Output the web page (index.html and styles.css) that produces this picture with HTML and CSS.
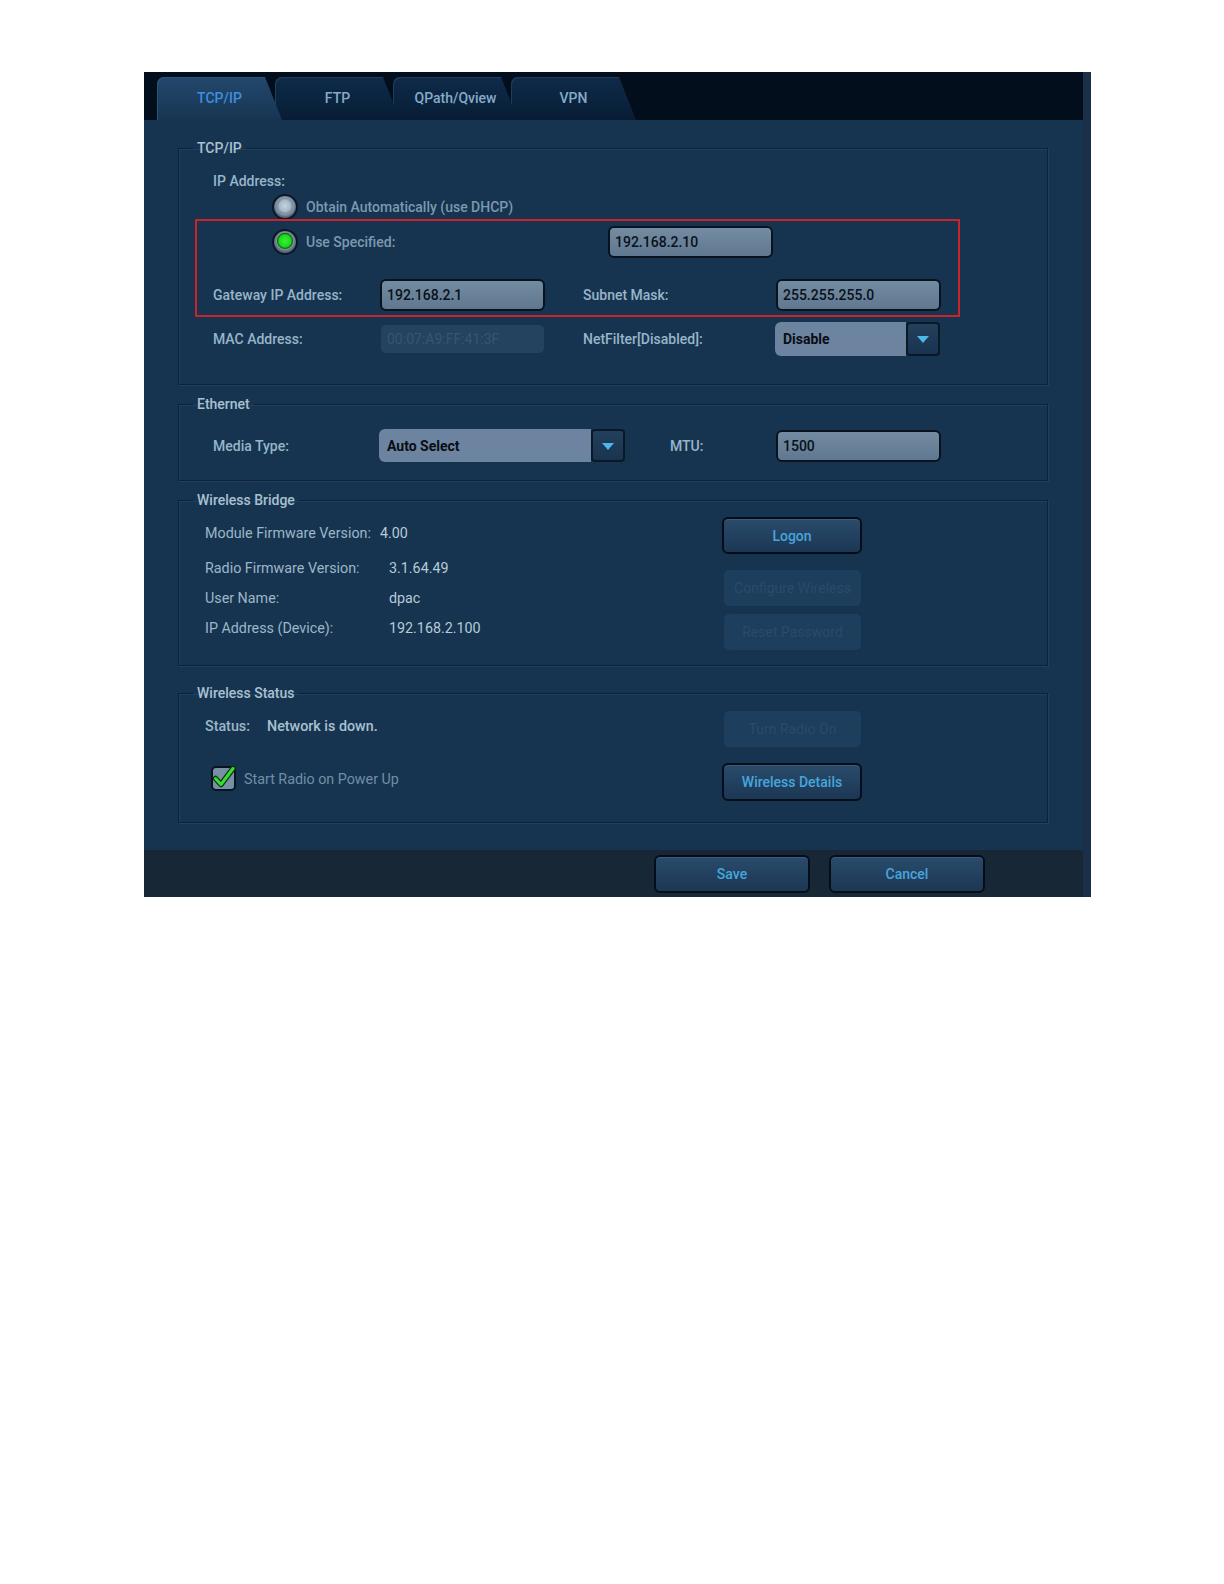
FILE: index.html
```html
<!DOCTYPE html>
<html lang="en">
<head>
  <meta charset="UTF-8">
  <title>Network Settings - TCP/IP</title>
  <link rel="stylesheet" href="styles.css">
</head>
<body>

<div class="panel">
  <div class="tabs">
    <div class="tab activa">TCP/IP</div>
    <div class="tab">FTP</div>
    <div class="tab">QPath/Qview</div>
    <div class="tab">VPN</div>
  </div>

  <div class="contenido">
    <fieldset class="grupo tcpip">
      <legend>TCP/IP</legend>
      <div class="cuerpo">
        <div class="fila-ip etiqueta">IP Address:</div>
        <div class="fila-radio r1">
          <span class="radio"></span>
          <span class="radio-texto">Obtain Automatically (use DHCP)</span>
        </div>
        <div class="fila-radio r2">
          <span class="radio marcado"></span>
          <span class="radio-texto spec">Use Specified:</span>
          <div class="campo">192.168.2.10</div>
        </div>
        <div class="fila-grid gw">
          <span class="etiqueta">Gateway IP Address:</span>
          <div class="campo">192.168.2.1</div>
          <span class="etiqueta">Subnet Mask:</span>
          <div class="campo">255.255.255.0</div>
        </div>
        <div class="fila-grid mac">
          <span class="etiqueta">MAC Address:</span>
          <div class="campo inactivo">00:07:A9:FF:41:3F</div>
          <span class="etiqueta">NetFilter[Disabled]:</span>
          <div class="combo corto">
            <span class="combo-valor">Disable</span>
            <span class="combo-flecha"></span>
          </div>
        </div>
      </div>
    </fieldset>

    <fieldset class="grupo ethernet">
      <legend>Ethernet</legend>
      <div class="cuerpo">
        <div class="fila-eth">
          <span class="etiqueta">Media Type:</span>
          <div class="combo largo">
            <span class="combo-valor">Auto Select</span>
            <span class="combo-flecha"></span>
          </div>
          <span class="etiqueta mtu">MTU:</span>
          <div class="campo">1500</div>
        </div>
      </div>
    </fieldset>

    <fieldset class="grupo bridge">
      <legend>Wireless Bridge</legend>
      <div class="doble">
        <div class="info">
          <div class="dato d1"><span class="dato-nombre libre">Module Firmware Version:</span><span class="dato-valor">4.00</span></div>
          <div class="dato d2"><span class="dato-nombre">Radio Firmware Version:</span><span class="dato-valor">3.1.64.49</span></div>
          <div class="dato d3"><span class="dato-nombre">User Name:</span><span class="dato-valor">dpac</span></div>
          <div class="dato d3"><span class="dato-nombre">IP Address (Device):</span><span class="dato-valor">192.168.2.100</span></div>
        </div>
        <div class="botones">
          <button class="boton b-logon">Logon</button>
          <button class="boton apagado b-conf">Configure Wireless</button>
          <button class="boton apagado b-reset">Reset Password</button>
        </div>
      </div>
    </fieldset>

    <fieldset class="grupo estado">
      <legend>Wireless Status</legend>
      <div class="doble">
        <div class="info">
          <div class="dato s1"><span class="dato-nombre status">Status:</span><span class="dato-valor">Network is down.</span></div>
          <div class="fila-check">
            <span class="check">
              <svg width="25" height="25" viewBox="0 0 25 25">
                <path d="M4.5 13.5 L10 19.5 L22 3.5" fill="none" stroke="#0b360b" stroke-width="5.5" stroke-linecap="round" stroke-linejoin="round"/>
                <path d="M4.5 13.5 L10 19.5 L22 3.5" fill="none" stroke="#39dc34" stroke-width="3" stroke-linecap="round" stroke-linejoin="round"/>
              </svg>
            </span>
            <span class="check-texto">Start Radio on Power Up</span>
          </div>
        </div>
        <div class="botones">
          <button class="boton apagado b-radio">Turn Radio On</button>
          <button class="boton b-detalles">Wireless Details</button>
        </div>
      </div>
    </fieldset>
  </div>

  <div class="pie">
    <button class="boton pie-boton">Save</button>
    <button class="boton pie-boton">Cancel</button>
  </div>

  <div class="marca-roja"></div>
</div>

</body>
</html>
```

FILE: styles.css
```css
* {
  box-sizing: border-box;
}
body {
  margin: 0;
  padding: 72px 0 0 144px;
  background: #fff;
  font-family: Roboto, "Liberation Sans", sans-serif;
  font-size: 14px;
}
.panel {
  position: relative;
  width: 947px;
  height: 825px;
  background: #163450;
  border-right: 8px solid #1b3048;
  display: flex;
  flex-direction: column;
}

/* pestañas */
.tabs {
  height: 48px;
  background: #020e1c;
  display: flex;
  align-items: flex-end;
  padding-left: 13px;
}
.tab {
  position: relative;
  width: 125px;
  height: 43px;
  margin-right: -7px;
  border-top-left-radius: 7px;
  clip-path: polygon(0 0, calc(100% - 17px) 0, 100% 100%, 0 100%);
  background: linear-gradient(#0e2b49, #081d35);
  box-shadow: inset 1px 1px #1e3c5b;
  color: #86abc8;
  font-weight: 500;
  text-align: center;
  line-height: 43px;
}
.tab:nth-child(2) { z-index: 3; }
.tab:nth-child(3) { z-index: 2; }
.tab:nth-child(4) { z-index: 1; }
.tab.activa {
  z-index: 4;
  background: linear-gradient(#22486d, #173552);
  box-shadow: inset 1px 1px #2b5479;
  color: #3d8fe0;
}

.contenido {
  flex: 1;
  padding: 19px 35px 0 34px;
}

/* grupos */
.grupo {
  margin: 0;
  padding: 0;
  border: 1px solid #0d2239;
  box-shadow: 1px 1px 0 #1f4060, inset 1px 1px 0 #1f4060;
}
.grupo legend {
  margin-left: 14px;
  padding: 0 4px;
  line-height: 18px;
  color: #a9c0d0;
  font-weight: 500;
}
.ethernet { margin-top: 10px; }
.bridge { margin-top: 10px; }
.estado { margin-top: 18px; }

.cuerpo {
  padding-left: 34px;
}
.tcpip .cuerpo { padding-bottom: 28px; }
.ethernet .cuerpo { padding-bottom: 18px; }

.etiqueta {
  color: #98b5c9;
  font-weight: 500;
}
.fila-ip {
  margin-top: 14px;
  height: 20px;
  line-height: 20px;
}
.fila-radio {
  display: flex;
  align-items: center;
  padding-left: 59px;
}
.fila-radio.r1 { margin-top: 3px; height: 26px; }
.fila-radio.r2 { margin-top: 6px; height: 32px; }
.radio {
  width: 26px;
  height: 26px;
  border-radius: 50%;
  border: 2px solid #0d1824;
  background: radial-gradient(circle at 50% 45%, #c4d3de 0, #a3b6c6 6px, #8095a7 7px, #7f93a4 9px, #54687a 11px);
}
.radio.marcado {
  background: radial-gradient(circle at 50% 45%, #3cf03c 0, #19d919 6px, #0b6d10 7.5px, #7d91a2 8.5px, #54687a 11px);
}
.radio-texto {
  margin-left: 8px;
  color: #7b99af;
  font-weight: 500;
}
.radio-texto.spec {
  width: 302px;
}

.fila-grid {
  display: grid;
  grid-template-columns: 167px 203px 193px 164px;
  align-items: center;
}
.fila-grid.gw { margin-top: 21px; height: 32px; }
.fila-grid.mac { margin-top: 11px; height: 34px; }

.campo {
  width: 165px;
  height: 32px;
  padding-left: 5px;
  border: 2px solid #08131f;
  border-radius: 6px;
  background: linear-gradient(#748ca2, #5f788f);
  color: #09111a;
  font-weight: 500;
  line-height: 28px;
}
.campo.inactivo {
  width: 163px;
  height: 28px;
  margin-left: 1px;
  border: none;
  border-radius: 5px;
  background: #23435f;
  color: #375671;
  font-weight: 400;
  padding-left: 6px;
}

.combo {
  display: flex;
  height: 34px;
}
.combo.corto { width: 165px; margin-left: -1px; }
.combo.largo { width: 246px; height: 33px; }
.combo-valor {
  flex: 1;
  padding-left: 8px;
  border-radius: 6px 0 0 6px;
  background: #6d84a0;
  color: #080d14;
  font-weight: 700;
  display: flex;
  align-items: center;
}
.combo-flecha {
  position: relative;
  width: 34px;
  border: 2px solid #0a1827;
  border-radius: 4px;
  background: linear-gradient(#223f5c, #1a3450);
}
.combo-flecha::after {
  content: "";
  position: absolute;
  left: 9px;
  top: 12px;
  border-left: 6px solid transparent;
  border-right: 6px solid transparent;
  border-top: 7px solid #4fb6ea;
}

.fila-eth {
  margin-top: 16px;
  display: flex;
  align-items: center;
  height: 33px;
}
.fila-eth > .etiqueta:first-child { width: 166px; }
.etiqueta.mtu {
  width: 106px;
  margin-left: 45px;
}

/* wireless */
.doble {
  display: flex;
  padding-left: 26px;
}
.info {
  width: 517px;
}
.dato {
  height: 20px;
  line-height: 20px;
  display: flex;
  font-size: 14.3px;
}
.dato-nombre {
  width: 184px;
  color: #9db6c8;
}
.dato-nombre.libre { width: 175px; }
.dato-nombre.status { width: 62px; }
.dato-valor {
  color: #b7cad8;
}
.dato.d1 { margin-top: 14px; }
.dato.d2 { margin-top: 15px; }
.dato.d3 { margin-top: 10px; }
.dato.s1 { margin-top: 14px; font-weight: 500; }
.dato.s1 .dato-valor { color: #a9c0d0; }

.fila-check {
  margin-top: 30px;
  padding-left: 6px;
  display: flex;
  align-items: center;
}
.check {
  width: 25px;
  height: 25px;
  border: 2px solid #0a1420;
  border-radius: 5px;
  background: #7790a5;
  display: flex;
}
.check svg {
  margin: -3px 0 0 -2px;
  overflow: visible;
}
.check-texto {
  margin-left: 8px;
  color: #6f8fa7;
  font-size: 14.3px;
}

.botones {
  display: flex;
  flex-direction: column;
}
.bridge .botones { padding-bottom: 15px; }
.estado .botones { padding-bottom: 21px; }

.boton {
  width: 140px;
  height: 37px;
  padding: 0;
  border: 2px solid #050e18;
  border-radius: 6px;
  background: linear-gradient(#2a4b6b, #1b3754);
  box-shadow: inset 0 1px #3a5c7c;
  color: #46a6dc;
  font-family: Roboto, "Liberation Sans", sans-serif;
  font-size: 14px;
  font-weight: 500;
}
.boton.apagado {
  width: 137px;
  height: 36px;
  margin-left: 2px;
  border: none;
  border-radius: 5px;
  background: #1e3e5d;
  box-shadow: none;
  color: #2a4b6a;
  font-weight: 400;
}
.b-logon { margin-top: 8px; }
.b-conf { margin-top: 16px; }
.b-reset { margin-top: 8px; }
.b-radio { margin-top: 9px; }
.b-detalles { margin-top: 16px; height: 38px; }

/* pie */
.pie {
  height: 47px;
  background: #172736;
  display: flex;
  justify-content: flex-end;
  gap: 19px;
  padding: 5px 98px 0 0;
}
.pie-boton {
  width: 156px;
  height: 38px;
}

.marca-roja {
  position: absolute;
  left: 51px;
  top: 147px;
  width: 765px;
  height: 98px;
  border: 2px solid #c9232b;
}
```
